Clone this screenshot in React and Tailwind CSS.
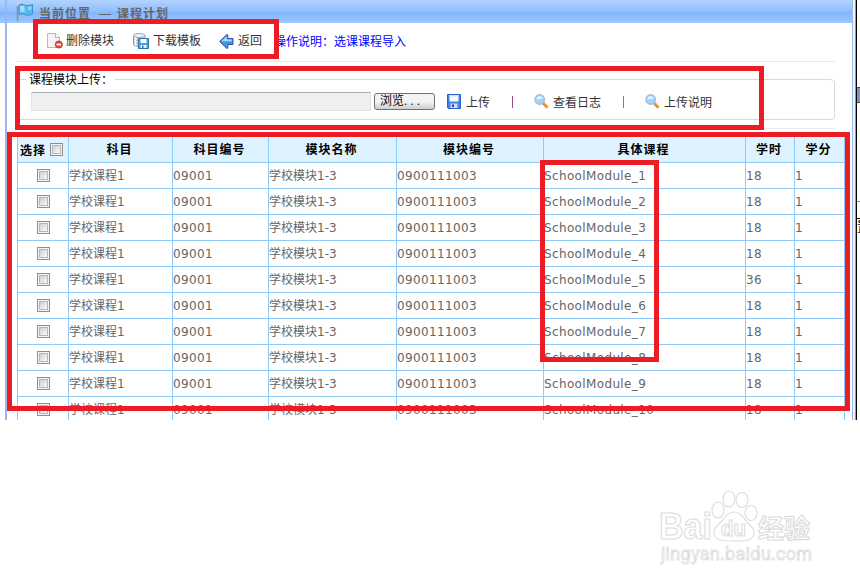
const columns = [
  { key: "subject", title: "科目", latin: false },
  { key: "subjectCode", title: "科目编号", latin: true },
  { key: "moduleName", title: "模块名称", latin: false },
  { key: "moduleCode", title: "模块编号", latin: true },
  { key: "course", title: "具体课程", latin: true },
  { key: "hours", title: "学时", latin: true },
  { key: "credit", title: "学分", latin: true },
];

const columnWidths = [51, 104, 96, 128, 147, 202, 49, 51];

const rows = [18, 18, 18, 18, 36, 18, 18, 18, 18, 18].map((hours, index) => ({
  subject: "学校课程1",
  subjectCode: "09001",
  moduleName: "学校模块1-3",
  moduleCode: "0900111003",
  course: `SchoolModule_${index + 1}`,
  hours,
  credit: 1,
}));

const FlagIcon = () => (
  <svg width="18" height="20" viewBox="0 0 18 20" className="shrink-0">
    <path d="M1.500 2v17" stroke="#8d9097" strokeWidth="1.600" />
    <path d="M.8 1h1.700v3H.8z" fill="#d9d3b5" />
    <path
      d="M3 3c2-1.200 4-.8 5.500 0 2 1 4 1 8-.5v9.500c-3 1.500-5.500 1.500-8 .5-2-1-3.500-1-5.500.3z"
      fill="#59b9ec"
      stroke="#3a93cd"
    />
    <path d="M4 4.200c2-.8 3-.5 4.500.2v6C7 9.700 6 9.700 4 10.300z" fill="#a5defa" />
    <path d="M12 4.700c1.500 0 2.500-.2 3.500-.6v3.500c-1 .4-2 .6-3.500.6z" fill="#8bd2f6" />
  </svg>
);

const DeleteIcon = () => (
  <svg width="16" height="16" viewBox="0 0 16 16" className="shrink-0">
    <path d="M.5.5h8l4 4v10H.5z" fill="#f4f4f4" stroke="#b9b9b9" />
    <path d="M8.500.5v4h4" fill="#fff" stroke="#b3b3b3" />
    <circle cx="11.800" cy="11.500" r="3.600" fill="#dc4a32" stroke="#c0392b" strokeWidth=".8" />
    <path d="M9.600 11.500h4.400" stroke="#fff" strokeWidth="1.800" />
  </svg>
);

const DatabaseSaveIcon = () => (
  <svg width="17" height="16" viewBox="0 0 17 16" className="shrink-0">
    <path d="M.5 2.500v9c0 1.300 2.500 2 5.500 2s6-.7 6-2v-9z" fill="#d5dadd" stroke="#9aa3a8" />
    <ellipse cx="6.250" cy="2.500" rx="5.750" ry="2" fill="#eff2f3" stroke="#9aa3a8" />
    <path
      d="M.5 5.500c0 1.300 2.500 2 5.500 2s6-.7 6-2M.5 8.500c0 1.300 2.500 2 5.500 2"
      fill="none"
      stroke="#9aa3a8"
    />
    <path d="M2.500 4.500v8" stroke="#fff" strokeWidth="1.500" />
    <path d="M5.500 5.500h10v10h-10z" fill="#4fa0dc" stroke="#2777b5" />
    <path d="M7.500 6h6v4h-6z" fill="#fff" />
    <path d="M7.500 12h6v3h-6z" fill="#e8f2fb" />
    <path d="M9 12.500h1.500V15H9z" fill="#2777b5" />
  </svg>
);

const BackIcon = () => (
  <svg width="15" height="15" viewBox="0 0 15 15" className="shrink-0">
    <path
      d="M.7 7.500 7.500.8h1.300v3.700H14v6H8.800v3.700H7.500z"
      fill="#3f97ea"
      stroke="#3a48a8"
      strokeLinejoin="round"
    />
    <path d="M2.500 7.300 7.700 2.300v3.300h5.200v1.700z" fill="#a6dcfb" />
  </svg>
);

const SaveIcon = () => (
  <svg width="14" height="15" viewBox="0 0 14 15" className="shrink-0">
    <path d="M.5.5h13v14H1.500l-1-1z" fill="#3d83ea" stroke="#2b62cc" />
    <path d="M2.500 1h9v6.500h-9z" fill="#f7fbff" />
    <path d="M2.500 1h9v1.500h-9z" fill="#cde3fb" />
    <path d="M3.500 9.500h7V14h-7z" fill="#d5dcf0" />
    <path d="M5 10.500h2V13H5z" fill="#2c3f99" />
  </svg>
);

const SearchIcon = () => (
  <svg width="15" height="15" viewBox="0 0 15 15" className="shrink-0">
    <path d="m9 9 4.500 4.500" stroke="#d98324" strokeWidth="2.800" />
    <path d="m9.300 8.700 4.500 4.500" stroke="#f6c061" />
    <circle cx="5.700" cy="5.500" r="4.800" fill="#a4d3fb" stroke="#a3b9d8" strokeWidth="1.200" />
    <path d="M2.500 5.500c0-2 1.300-3.300 3.300-3.300 1.700 0 2.800 1 3 2.100-2 .2-4 .5-6.300 1.200z" fill="#e8f6ff" />
  </svg>
);

const Checkbox = () => (
  <span className="block size-[13px] shrink-0 border border-[#8e8f8f] bg-[#f4f4f4] p-px">
    <span className="block size-[9px] border border-[#b4b8bd] bg-linear-to-br from-[#cbcfd5] to-[#fafafa]" />
  </span>
);

// hand-marked highlight frames laid over the page
const Marks = () => (
  <>
    <div className="absolute left-[33px] top-[19px] h-[40px] w-[246px] border-5 border-[#ed1c24]" />
    <div className="absolute left-[15px] top-[66px] h-[64px] w-[749px] border-5 border-[#ed1c24]" />
    <div className="absolute left-[7px] top-[132px] h-[279px] w-[843px] border-5 border-[#ed1c24]" />
    <div className="absolute left-[540px] top-[160px] h-[202px] w-[119px] border-5 border-[#ed1c24]" />
  </>
);

const Toolbar = () => (
  <div className="ml-[10px] flex h-[39px] w-[818px] items-center border-b border-[#e8e8e8] pb-[2px] pl-[30px] text-[#333]">
    <DeleteIcon />
    <span className="ml-[3px] w-[67px]">删除模块</span>
    <DatabaseSaveIcon />
    <span className="ml-[3px] w-[66px]">下载模板</span>
    <BackIcon />
    <span className="ml-[4px]">返回</span>
    <span className="ml-[12px] pt-px text-[#0000ff]">操作说明：选课课程导入</span>
  </div>
);

const UploadForm = () => (
  <div className="ml-[10px] h-[67px] w-[818px] border-b border-[#e8e8e8] pt-[10px]">
    <fieldset className="h-[48px] rounded-[4px] border border-[#d0dbe5] pl-[8px]">
      <legend className="h-[14px] pl-[3px] pr-[2px] leading-[16px] text-black">课程模块上传：</legend>
      <div className="ml-[5px] mt-[6px] flex h-[19px] items-center text-[#333]">
        <span className="h-[19px] w-[340px] border border-[#e2e3ea] border-t-[#abadb3] bg-[#efefef]" />
        <span className="ml-[3px] h-[17px] w-[61px] rounded-[3px] border border-[#707070] bg-linear-to-b from-[#f4f4f4] from-50% to-[#cfcfcf] pl-[5px] leading-[14px] text-black">
          浏览
          <span className="tracking-[3px]">...</span>
        </span>
        <span className="ml-[12px] flex w-[65px] items-center gap-[5px]">
          <SaveIcon />
          <span className="pt-[2px]">上传</span>
        </span>
        <span className="h-[12px] w-px bg-[#96508c]" />
        <span className="ml-[21px] flex w-[89px] items-center gap-[4px]">
          <SearchIcon />
          <span className="pt-[2px]">查看日志</span>
        </span>
        <span className="h-[12px] w-px bg-[#4f9c6a]" />
        <span className="ml-[21px] flex items-center gap-[4px]">
          <SearchIcon />
          <span className="pt-[2px]">上传说明</span>
        </span>
      </div>
    </fieldset>
  </div>
);

const CourseTable = () => (
  <table className="ml-[10px] mt-[7px] w-[828px] table-fixed border-separate border-spacing-0">
    <colgroup>
      {columnWidths.map((width, index) => (
        <col key={index} style={{ width }} />
      ))}
    </colgroup>
    <thead>
      <tr className="h-[27px] bg-[#dff2ff] text-black">
        <th className="border-b border-l border-[#8fcbfa] p-0">
          <div className="flex items-center gap-[4px] pl-[2px] tracking-[1px]">
            <span className="w-[26px] pt-[3px]">选择</span>
            <Checkbox />
          </div>
        </th>
        {columns.map((column) => (
          <th
            key={column.key}
            className="border-b border-l border-[#8fcbfa] p-0 pr-[2px] pt-[2px] tracking-[1px] last:border-r"
          >
            {column.title}
          </th>
        ))}
      </tr>
    </thead>
    <tbody>
      {rows.map((row) => (
        <tr key={row.course} className="h-[26px] text-[#666]">
          <td className="border-b border-l border-[#8fcbfa] p-0">
            <div className="flex justify-center">
              <Checkbox />
            </div>
          </td>
          {columns.map((column) => (
            <td
              key={column.key}
              className={
                column.latin
                  ? "border-b border-l border-[#8fcbfa] p-0 font-['DejaVu_Sans',sans-serif] tracking-[0.36px] last:border-r"
                  : "border-b border-l border-[#8fcbfa] p-0 font-['DejaVu_Sans','Noto_Sans_CJK_SC',sans-serif]"
              }
            >
              {row[column.key]}
            </td>
          ))}
        </tr>
      ))}
    </tbody>
  </table>
);

const Watermark = () => (
  <svg
    width="180"
    height="84"
    viewBox="0 0 180 84"
    className="ml-[650px] mt-[68px]"
    fill="#fff"
    stroke="#dcdcdc"
    strokeWidth="1.1"
  >
    <text
      x="9"
      y="51"
      fontFamily="Liberation Sans"
      fontWeight="700"
      fontSize="36"
      textLength="53"
      lengthAdjust="spacingAndGlyphs"
    >
      Bai
    </text>
    <path d="M84 24c6 0 9 5 13 10 4 4 8 7 7 12-1 6-7 7-20 7s-19-1-20-7c-1-5 3-8 7-12 4-5 7-10 13-10z" />
    <ellipse cx="68" cy="22" rx="6" ry="8" />
    <ellipse cx="79" cy="11" rx="6" ry="8" />
    <ellipse cx="92" cy="12" rx="6" ry="7.500" />
    <ellipse cx="101" cy="25" rx="6" ry="7.500" />
    <text
      x="71"
      y="48"
      fontFamily="Liberation Sans"
      fontWeight="700"
      fontSize="22"
      textLength="25"
      lengthAdjust="spacingAndGlyphs"
    >
      du
    </text>
    <text x="108" y="50" fontFamily="Noto Sans CJK SC" fontWeight="700" fontSize="26" textLength="52">
      经验
    </text>
    <text x="11" y="72" fontFamily="Roboto" fontSize="18" textLength="151" strokeWidth=".8">
      jingyan.baidu.com
    </text>
  </svg>
);

export default function App() {
  return (
    <div className="relative h-[584px] w-[860px] overflow-hidden bg-white font-['Liberation_Sans','Noto_Sans_CJK_SC',sans-serif] text-[12px] leading-[16px]">
      <div className="flex h-[420px] overflow-hidden">
        <div className="w-[5px] shrink-0">
          <div className="h-[23px] bg-[linear-gradient(#b2d3ff_0px,#8ebcfb_12px,#7fb4fe_12px,#9fc9ff_23px)]" />
        </div>
        <div className="w-[848px] shrink-0 border-l-2 border-r border-[#97b9ea]">
          <div className="flex h-[23px] items-center bg-[linear-gradient(#b2d3ff_0px,#8ebcfb_12px,#7fb4fe_12px,#9fc9ff_23px)] pl-[9px] font-bold tracking-[1px] text-[#666]">
            <FlagIcon />
            <span className="ml-[5px] w-[60px] pt-[4px]">当前位置</span>
            <span className="w-[18px] pt-[4px] font-normal">—</span>
            <span className="pt-[4px]">课程计划</span>
          </div>
          <Toolbar />
          <UploadForm />
          <CourseTable />
        </div>
        <div className="w-[2px] shrink-0 bg-[#f2f4fa]" />
        <div className="w-[2px] shrink-0 border-l border-[#999] bg-black" />
        <div className="w-[3px] shrink-0 overflow-hidden pt-[87px]">
          <div className="h-[16px] border-y border-[#444] bg-[#7896c6]" />
          <div className="mt-[98px] h-px bg-[#888]" />
          <div className="mt-[16px] h-[16px] w-[12px] border-t border-black text-[13px] text-black">
            置
          </div>
        </div>
      </div>
      <Watermark />
      <Marks />
    </div>
  );
}
